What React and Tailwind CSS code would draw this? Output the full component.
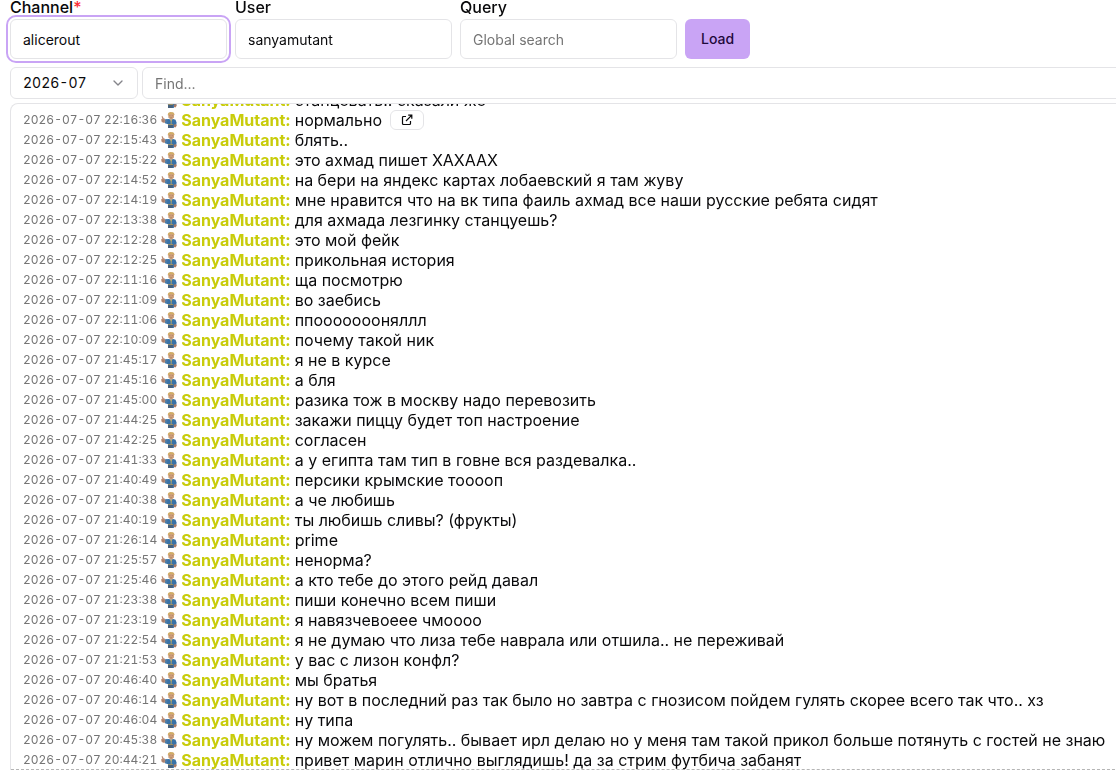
import { ChevronDown } from "lucide-react";

const USER = "SanyaMutant";

const messages = [
  ["22:16:41", "станцевать.. сказали же"],
  ["22:16:36", "нормально"],
  ["22:15:43", "блять.."],
  ["22:15:22", "это ахмад пишет ХАХААХ"],
  ["22:14:52", "на бери на яндекс картах лобаевский я там жуву"],
  ["22:14:19", "мне нравится что на вк типа фаиль ахмад все наши русские ребята сидят"],
  ["22:13:38", "для ахмада лезгинку станцуешь?"],
  ["22:12:28", "это мой фейк"],
  ["22:12:25", "прикольная история"],
  ["22:11:16", "ща посмотрю"],
  ["22:11:09", "во заебись"],
  ["22:11:06", "ппоооооооняллл"],
  ["22:10:09", "почему такой ник"],
  ["21:45:17", "я не в курсе"],
  ["21:45:16", "а бля"],
  ["21:45:00", "разика тож в москву надо перевозить"],
  ["21:44:25", "закажи пиццу будет топ настроение"],
  ["21:42:25", "согласен"],
  ["21:41:33", "а у египта там тип в говне вся раздевалка.."],
  ["21:40:49", "персики крымские тооооп"],
  ["21:40:38", "а че любишь"],
  ["21:40:19", "ты любишь сливы? (фрукты)"],
  ["21:26:14", "prime"],
  ["21:25:57", "ненорма?"],
  ["21:25:46", "а кто тебе до этого рейд давал"],
  ["21:23:38", "пиши конечно всем пиши"],
  ["21:23:19", "я навязчевоеее чмоооо"],
  ["21:22:54", "я не думаю что лиза тебе наврала или отшила.. не переживай"],
  ["21:21:53", "у вас с лизон конфл?"],
  ["20:46:40", "мы братья"],
  ["20:46:14", "ну вот в последний раз так было но завтра с гнозисом пойдем гулять скорее всего так что.. хз"],
  ["20:46:04", "ну типа"],
  ["20:45:38", "ну можем погулять.. бывает ирл делаю но у меня там такой прикол больше потянуть с гостей не знаю"],
  ["20:44:21", "привет марин отлично выглядишь! да за стрим футбича забанят"],
];

function Badge() {
  return (
    <svg viewBox="0 0 16 16" className="mx-1 size-4 shrink-0" aria-hidden="true">
      <path d="M4 7.6 7.4 7l2.6.5 2.3-.5 2.2.8 1.1 2.8-.3 2.2-1.9.2-.6 2.9H7l.1-3.6-3.2-1z" fill="#3972a6" />
      <path d="M4 7.7 6 7.3l.6 1.6-.7 2.2-2-.4z" fill="#4b7ba6" />
      <path d="m7.2 12.6 4.8.2-.5 3.2H7z" fill="#47617c" />
      <path d="m8.6 7.1 1.5.9 1.4-.9-.9 1.9-.2 3.5h-.6l-.1-3.6z" fill="#d3b765" />
      <path d="M7.1 12.3h5v.7h-5z" fill="#b59a58" />
      <path d="m.1 7.5 1.2-.9-.8-2.1.9-.5 1.3 2.2 1.2.5.4 2.5-.5 1.5-1.6.1L.6 9.7z" fill="#b98d78" />
      <path d="M1.1 8.2h2M1.4 9.4h1.8" stroke="#8f6a5c" strokeWidth=".4" />
      <path d="M7.1 2.5 8.2 1h4.1l.9 1.3-.3 3.1-1.6 1.9H9.2L7.4 5.5z" fill="#cfa07c" />
      <path d="M6.7 3.2 7.2 1 9 0l3.2.2 1.1 1.5-.3 1.6-1.2-1.3-2.7.3-1.4.6z" fill="#d0ac66" />
      <path d="M8.3 3.7h1.1M10.8 3.7h1.1M9.2 5.8h1.9" stroke="#936a50" strokeWidth=".5" />
      <path d="m12.9 12.6 2.5-.4.3 1.6-1.2 1.6-1.7-.3z" fill="#a97b64" />
    </svg>
  );
}

function OpenIcon() {
  return (
    <svg viewBox="0 0 12 12" className="size-3" fill="none" stroke="currentColor" strokeWidth="1.2" aria-hidden="true">
      <path d="M5 2.5H2.5a1 1 0 0 0-1 1v6a1 1 0 0 0 1 1h6a1 1 0 0 0 1-1V7" />
      <path d="M7.2 1.2h3.6v3.6M10.6 1.4 5 7" />
    </svg>
  );
}

function Field({ id, label, required, ...input }) {
  return (
    <div className="flex w-[217px] flex-col gap-[5px]">
      <label htmlFor={id} className="text-base leading-[14px] font-medium">
        {label}
        {required && <span className="text-red-500">*</span>}
      </label>
      <input
        id={id}
        className="h-10 w-full rounded-md border border-[#e4e4e7] bg-white px-3 text-sm outline-[#c9a4f5] placeholder:text-[#757575] focus:outline-2 focus:outline-offset-2"
        {...input}
      />
    </div>
  );
}

function Message({ time, text, open, last }) {
  return (
    <li className={last ? "flex h-5 items-center border-b border-dashed border-[#b5b5b5] px-3" : "flex h-5 items-center px-3"}>
      <time className="shrink-0 text-xs leading-5 whitespace-nowrap text-[#757575] tabular-nums">2026-07-07 {time}</time>
      <Badge />
      <span className="text-base leading-5 font-bold text-[#c8cc0a]">{USER}:</span>
      <span className="ml-1 text-base leading-5 whitespace-nowrap">{text}</span>
      {open && (
        <button type="button" aria-label="Open message" className="ml-2 flex h-5 w-[34px] shrink-0 items-center justify-center rounded-md border border-[#e4e4e7]">
          <OpenIcon />
        </button>
      )}
    </li>
  );
}

export default function App() {
  return (
    <main className="overflow-hidden bg-white pl-[10px] font-['Inter',sans-serif] text-[#09090b]">
      <form className="flex items-end gap-2" onSubmit={(e) => e.preventDefault()}>
        <Field id="channel" label="Channel" required defaultValue="alicerout" autoFocus />
        <Field id="user" label="User" defaultValue="sanyamutant" />
        <Field id="query" label="Query" placeholder="Global search" />
        <button type="submit" className="h-10 rounded-md bg-[#c9a4f5] px-4 text-sm font-medium text-[#1f0a3c]">
          Load
        </button>
      </form>

      <div className="-mr-5 mt-2 flex gap-1">
        <div className="relative w-32 shrink-0">
          <select aria-label="Month" defaultValue="2026-07" className="h-8 w-full appearance-none rounded-md border border-[#e4e4e7] bg-white pl-3 text-sm tabular-nums">
            <option>2026-07</option>
          </select>
          <ChevronDown className="pointer-events-none absolute top-2 right-3 size-4 text-[#84848a]" strokeWidth={2} />
        </div>
        <input aria-label="Find" placeholder="Find..." className="h-8 min-w-0 flex-1 rounded-md border border-[#e4e4e7] px-3 text-sm outline-none placeholder:text-[#757575]" />
      </div>

      <section className="-mr-5 mt-1 overflow-hidden rounded-tl-lg border border-b-0 border-[#e4e4e7]">
        <ul className="-mt-[14px]">
          {messages.map(([time, text], i) => (
            <Message key={time} time={time} text={text} open={i === 1} last={i === messages.length - 1} />
          ))}
        </ul>
      </section>
    </main>
  );
}
